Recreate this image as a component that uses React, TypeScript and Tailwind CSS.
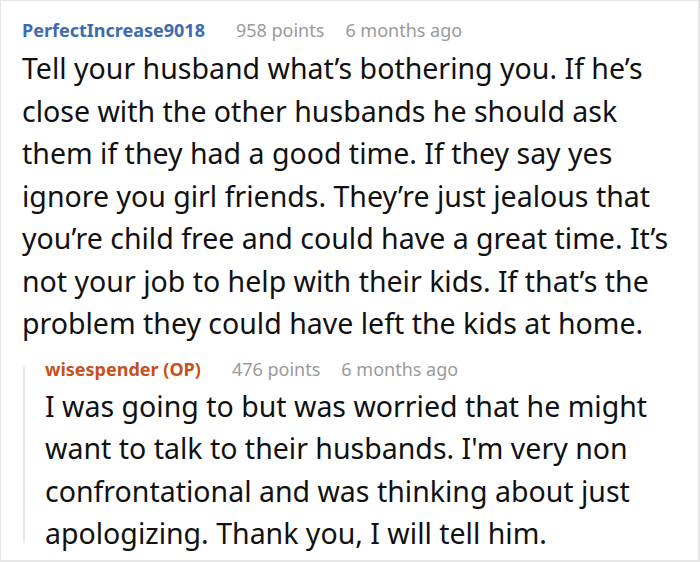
const mainLines = [
  'Tell your husband what’s bothering you. If he’s',
  'close with the other husbands he should ask',
  'them if they had a good time. If they say yes',
  'ignore you girl friends. They’re just jealous that',
  'you’re child free and could have a great time. It’s',
  'not your job to help with their kids. If that’s the',
  'problem they could have left the kids at home.',
];

const replyLines = [
  'I was going to but was worried that he might',
  "want to talk to their husbands. I'm very non",
  'confrontational and was thinking about just',
  'apologizing. Thank you, I will tell him.',
];

function Meta({ name, color, points }: { name: string; color: string; points: string }) {
  return (
    <div className="flex items-baseline text-[18px] leading-[26px]">
      <span className={`font-bold ${color}`}>{name}</span>
      <span className="ml-[31px] text-[#9a9a9a]">{points}</span>
      <span className="ml-[21px] text-[#9a9a9a]">6 months ago</span>
    </div>
  );
}

function Body({ lines, className = '' }: { lines: string[]; className?: string }) {
  return (
    <p className={`text-[28.5px] leading-[42.5px] text-[#111] ${className}`}>
      {lines.map((l, i) => (
        <span key={i} className="block whitespace-nowrap">
          {l}
        </span>
      ))}
    </p>
  );
}

export default function App() {
  return (
    <div
      className="w-[700px] h-[562px] bg-white border border-[#e6e6e6] border-r-2 border-b-2 overflow-hidden"
      style={{ fontFamily: '"Noto Sans", "Open Sans", sans-serif' }}
    >
      <div className="pl-[21px] pr-2 pt-[16px]">
        <Meta name="PerfectIncrease9018" color="text-[#3d6bb3]" points="958 points" />
        <Body lines={mainLines} className="mt-[4px]" />
        <div className="flex mt-[11px] ml-[1px]">
          <div className="w-[2px] bg-[#e8e8e8] mt-[11px] mb-[12px] shrink-0" />
          <div className="pl-[20px]">
            <Meta name="wisespender (OP)" color="text-[#c7501b]" points="476 points" />
            <Body lines={replyLines} className="mt-[3px]" />
          </div>
        </div>
      </div>
    </div>
  );
}
